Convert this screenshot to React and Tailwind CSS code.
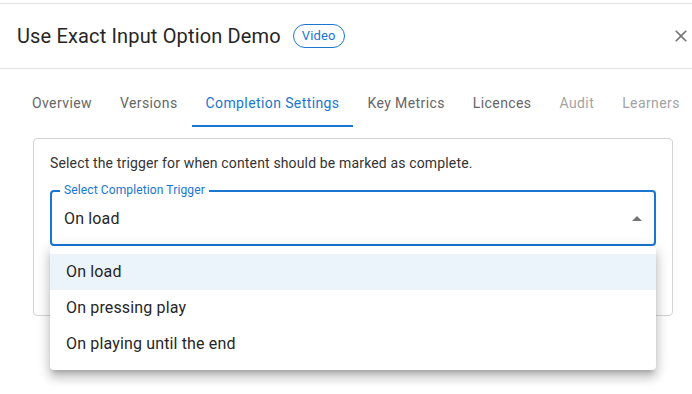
import React from 'react';

const tabs = [
  { label: 'Overview', state: 'idle' },
  { label: 'Versions', state: 'idle' },
  { label: 'Completion Settings', state: 'active' },
  { label: 'Key Metrics', state: 'idle' },
  { label: 'Licences', state: 'idle' },
  { label: 'Audit', state: 'disabled' },
  { label: 'Learners', state: 'disabled' },
];

const options = ['On load', 'On pressing play', 'On playing until the end'];

const tabColor = {
  idle: 'text-[#666666]',
  active: 'text-[#1976d2]',
  disabled: 'text-[#a3a3a3]',
};

const App = () => {
  return (
    <div className="h-[394px] w-full overflow-hidden bg-white pt-[3px] font-['Roboto',sans-serif]">
      <div className="border-t border-[#e3e3e3]">
        <div className="flex h-[65px] items-center justify-between border-b border-[#e3e3e3] pl-[17px] pr-[1px]">
          <div className="flex items-center">
            <h2 className="whitespace-nowrap text-[20px] leading-none tracking-[0.15px] text-[#262626]">Use Exact Input Option Demo</h2>
            <span className="ml-[12px] flex h-[24px] items-center rounded-full border border-[#1976d2] px-[8px] text-[13px] tracking-[0.16px] text-[#1976d2]">
              Video
            </span>
          </div>
          <svg width="20" height="20" viewBox="0 0 24 24" className="shrink-0 fill-[#757575]">
            <path d="M19 6.41 17.59 5 12 10.59 6.41 5 5 6.41 10.59 12 5 17.59 6.41 19 12 13.41 17.59 19 19 17.59 13.41 12z" />
          </svg>
        </div>

        <div className="mt-[10px] flex pl-[18px]">
          {tabs.map((tab) => (
            <div
              key={tab.label}
              className={`relative flex h-[48px] shrink-0 items-center whitespace-nowrap px-[14px] text-[14px] tracking-[0.4px] ${tabColor[tab.state]}`}
            >
              {tab.label}
              {tab.state === 'active' && <span className="absolute bottom-0 left-0 right-0 h-[2px] bg-[#1976d2]" />}
            </div>
          ))}
        </div>

        <div className="ml-[33px] mt-[11px] h-[178px] w-[640px] rounded-[4px] border border-[#d4d4d4] px-[16px] pt-[14px]">
          <p className="text-[14px] leading-[20px] tracking-[0.15px] text-[#333333]">Select the trigger for when content should be marked as complete.</p>

          <div className="relative mt-[17px]">
            <div className="relative flex h-[56px] items-center justify-between rounded-[4px] border-2 border-[#1976d2] pl-[12px] pr-[12px]">
              <span className="absolute -top-[9px] left-[8px] whitespace-nowrap bg-white px-[4px] text-[12px] leading-[14px] tracking-[0.12px] text-[#1976d2]">
                Select Completion Trigger
              </span>
              <span className="pt-[1px] text-[16px] tracking-[0.15px] text-[#262626]">On load</span>
              <svg width="10" height="5" viewBox="0 0 10 5" className="shrink-0 fill-[#757575]">
                <polygon points="0,5 5,0 10,5" />
              </svg>
            </div>

            <div className="absolute left-0 right-0 top-[56px] rounded-[4px] bg-white py-[8px] shadow-[0px_5px_5px_-3px_rgba(0,0,0,0.2),0px_8px_10px_1px_rgba(0,0,0,0.14),0px_3px_14px_2px_rgba(0,0,0,0.12)]">
              {options.map((option, index) => (
                <div
                  key={option}
                  className={`flex h-[36px] items-center px-[16px] text-[16px] tracking-[0.15px] text-[#262626] ${index === 0 ? 'bg-[#ebf3fb]' : ''}`}
                >
                  {option}
                </div>
              ))}
            </div>
          </div>
        </div>
      </div>
    </div>
  );
};

export default App;
